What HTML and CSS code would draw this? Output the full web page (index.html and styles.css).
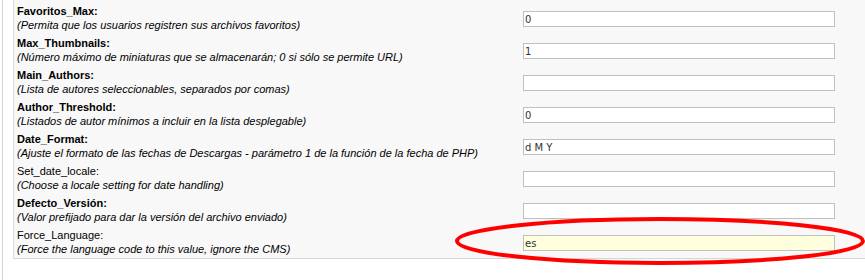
FILE: index.html
```html
<!DOCTYPE html>
<html lang="es">
<head>
    <meta charset="UTF-8">
    <meta name="viewport" content="width=device-width, initial-scale=1.0">
    <title>Configuración</title>
    <link rel="stylesheet" href="styles.css">
</head>
<body>

    <div class="page">
        <div class="panel">

            <div class="row">
                <div class="info">
                    <div class="name">Favoritos_Max:</div>
                    <div class="desc">(Permita que los usuarios registren sus archivos favoritos)</div>
                </div>
                <input type="text" value="0">
            </div>

            <div class="row">
                <div class="info">
                    <div class="name">Max_Thumbnails:</div>
                    <div class="desc">(Número máximo de miniaturas que se almacenarán; 0 si sólo se permite URL)</div>
                </div>
                <input type="text" value="1">
            </div>

            <div class="row">
                <div class="info">
                    <div class="name">Main_Authors:</div>
                    <div class="desc">(Lista de autores seleccionables, separados por comas)</div>
                </div>
                <input type="text" value="">
            </div>

            <div class="row">
                <div class="info">
                    <div class="name">Author_Threshold:</div>
                    <div class="desc">(Listados de autor mínimos a incluir en la lista desplegable)</div>
                </div>
                <input type="text" value="0">
            </div>

            <div class="row">
                <div class="info">
                    <div class="name">Date_Format:</div>
                    <div class="desc">(Ajuste el formato de las fechas de Descargas - parámetro 1 de la función de la fecha de PHP)</div>
                </div>
                <input type="text" value="d M Y">
            </div>

            <div class="row">
                <div class="info">
                    <div class="name plain">Set_date_locale:</div>
                    <div class="desc">(Choose a locale setting for date handling)</div>
                </div>
                <input type="text" value="">
            </div>

            <div class="row">
                <div class="info">
                    <div class="name">Defecto_Versión:</div>
                    <div class="desc">(Valor prefijado para dar la versión del archivo enviado)</div>
                </div>
                <input type="text" value="">
            </div>

            <div class="row">
                <div class="info">
                    <div class="name plain">Force_Language:</div>
                    <div class="desc">(Force the language code to this value, ignore the CMS)</div>
                </div>
                <input type="text" class="highlight" value="es">
            </div>

        </div>
    </div>

    <!-- red marker drawn over the screenshot -->
    <svg class="marker" width="865" height="280" viewBox="0 0 865 280">
        <ellipse cx="660" cy="241" rx="203" ry="22" fill="none" stroke="#f00" stroke-width="4"/>
    </svg>

</body>
</html>
```

FILE: styles.css
```css
html, body {
    margin: 0;
    padding: 0;
    background: #fff;
    overflow: hidden;
}

body {
    font-family: "Liberation Sans", Arial, sans-serif;
    font-size: 11px;
    color: #000;
    position: relative;
    height: 280px;
}

.page {
    margin-left: 2px;
    border-left: 1px solid #d4d4d4;
    height: 280px;
    width: 900px;
}

.panel {
    margin-left: 10px;
    background: #f8f8f8;
    border-left: 1px solid #dcdcdc;
    border-bottom: 1px solid #d6d6d6;
    padding: 1px 0 1px 3px;
}

.row {
    display: grid;
    grid-template-columns: 506px 312px;
    align-items: start;
    height: 32px;
}

.info {
    line-height: 14px;
    padding-top: 3px;
}

.name {
    font-weight: bold;
}

.name.plain {
    font-weight: normal;
}

.desc {
    font-style: italic;
}

input {
    box-sizing: border-box;
    width: 312px;
    height: 16px;
    margin: 10px 0 0;
    padding: 0 1px;
    border: 1px solid #c0c0c0;
    background: #fff;
    font-family: "DejaVu Sans", Verdana, sans-serif;
    font-size: 10px;
    color: #333;
    outline: none;
}

input.highlight {
    background: #ffffdd;
}

.marker {
    position: absolute;
    top: 0;
    left: 0;
}
```
